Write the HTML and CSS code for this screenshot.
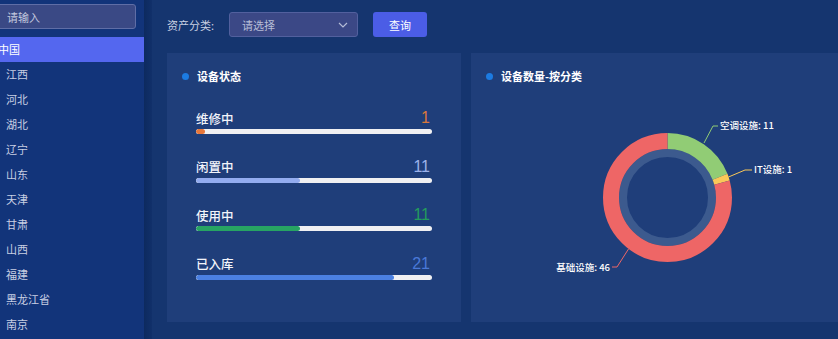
FILE: index.html
```html
<!DOCTYPE html>
<html lang="zh-CN">
<head>
    <meta charset="UTF-8">
    <meta name="viewport" content="width=device-width, initial-scale=1.0">
    <title>资产统计</title>
    <link rel="stylesheet" href="styles.css">
</head>
<body>

<div class="page">
    <div class="sidebar">
        <div class="search">
            <input type="text" placeholder="请输入">
        </div>
        <ul class="tree">
            <li class="root active"><span>中国</span></li>
            <li>江西</li>
            <li>河北</li>
            <li>湖北</li>
            <li>辽宁</li>
            <li>山东</li>
            <li>天津</li>
            <li>甘肃</li>
            <li>山西</li>
            <li>福建</li>
            <li>黑龙江省</li>
            <li>南京</li>
        </ul>
    </div>
    <div class="divider"></div>

    <div class="main">
        <div class="filter">
            <label>资产分类:</label>
            <div class="select">
                <span>请选择</span>
                <svg width="10" height="6" viewBox="0 0 10 6"><path d="M1 1l4 4 4-4" fill="none" stroke="#b4bcd6" stroke-width="1.2"/></svg>
            </div>
            <button class="query">查询</button>
        </div>

        <div class="cards">
            <div class="card status">
                <div class="card-title"><i></i>设备状态</div>
                <div class="status-list">
                    <div class="row">
                        <div class="row-head"><span>维修中</span><b class="orange">1</b></div>
                        <div class="bar"><div class="fill orange-bg" style="width: 4%"></div></div>
                    </div>
                    <div class="row">
                        <div class="row-head"><span>闲置中</span><b class="lilac">11</b></div>
                        <div class="bar"><div class="fill lilac-bg" style="width: 44%"></div></div>
                    </div>
                    <div class="row">
                        <div class="row-head"><span>使用中</span><b class="green">11</b></div>
                        <div class="bar"><div class="fill green-bg" style="width: 44%"></div></div>
                    </div>
                    <div class="row">
                        <div class="row-head"><span>已入库</span><b class="blue">21</b></div>
                        <div class="bar"><div class="fill blue-bg" style="width: 84%"></div></div>
                    </div>
                </div>
            </div>

            <div class="card chart">
                <div class="card-title"><i></i>设备数量-按分类</div>
                <svg class="donut" width="367" height="227">
                    <circle cx="196.5" cy="102.5" r="44.5" fill="none" stroke="#3c5a8e" stroke-width="8"/>
                    <g transform="rotate(-90 196.5 102.5)">
                        <circle cx="196.5" cy="102.5" r="56.5" fill="none" stroke="#91cc75" stroke-width="16" stroke-dasharray="67.33 400"/>
                        <circle cx="196.5" cy="102.5" r="56.5" fill="none" stroke="#fac858" stroke-width="16" stroke-dasharray="6.12 400" stroke-dashoffset="-67.33"/>
                        <circle cx="196.5" cy="102.5" r="56.5" fill="none" stroke="#ee6666" stroke-width="16" stroke-dasharray="281.55 400" stroke-dashoffset="-73.45"/>
                    </g>
                    <polyline points="233,48 242,31 247,31" fill="none" stroke="#91cc75" stroke-width="1"/>
                    <polyline points="257.5,82 274,75 281,75" fill="none" stroke="#fac858" stroke-width="1"/>
                    <polyline points="157.5,154 146,172 141,172" fill="none" stroke="#ee6666" stroke-width="1"/>
                    <text x="249" y="34">空调设施: 11</text>
                    <text x="283" y="78">IT设施: 1</text>
                    <text x="139" y="176" text-anchor="end">基础设施: 46</text>
                </svg>
            </div>
        </div>
    </div>
</div>

</body>
</html>
```

FILE: styles.css
```css
* {
    box-sizing: border-box;
}

html, body {
    margin: 0;
    height: 100%;
    overflow: hidden;
}

body {
    font-family: "Noto Sans CJK SC", "Noto Sans", sans-serif;
    background: #15356f;
    color: #c4cce2;
}

.page {
    display: flex;
    height: 100vh;
}

.sidebar {
    width: 144px;
    flex-shrink: 0;
    background: #12347a;
    padding-top: 4px;
    overflow: hidden;
}

.divider {
    width: 8px;
    flex-shrink: 0;
    background: linear-gradient(90deg, #0d2a5f, #11306a);
}

.search input {
    display: block;
    width: 140px;
    height: 25px;
    margin-left: -4px;
    padding: 0 10px;
    font: 11px "Noto Sans CJK SC", sans-serif;
    background: #3a4985;
    border: 1px solid #5f6ea6;
    border-radius: 3px;
    color: #fff;
    outline: none;
}

.search input::placeholder {
    color: #c3c8de;
}

.tree {
    list-style: none;
    margin: 8px 0 0;
    padding: 0;
}

.tree li {
    height: 25px;
    line-height: 25px;
    padding-left: 6px;
    font-size: 11px;
    color: #c8cfe3;
    white-space: nowrap;
}

.tree li.root {
    padding-left: 0;
}

.tree li.root span {
    margin-left: -2px;
}

.tree li.active {
    background: #5467ef;
    color: #fff;
}

.main {
    flex: 1;
    min-width: 0;
    padding: 12px 0 0 15px;
    display: flex;
    flex-direction: column;
}

.filter {
    display: flex;
    align-items: center;
    height: 25px;
}

.filter label {
    font-size: 11px;
    color: #c9d0e2;
    width: 62px;
}

.select {
    width: 129px;
    height: 25px;
    background: #3b4886;
    border: 1px solid #52609e;
    border-radius: 3px;
    display: flex;
    align-items: center;
    justify-content: space-between;
    padding: 0 9px 0 12px;
    font-size: 11px;
    color: #b7bed7;
}

.query {
    margin-left: 15px;
    width: 54px;
    height: 25px;
    border: none;
    border-radius: 3px;
    background: #4b5de6;
    color: #fff;
    font: 11px "Noto Sans CJK SC", sans-serif;
}

.cards {
    display: flex;
    gap: 10px;
    margin-top: 16px;
    height: 269px;
}

.card {
    background: #1f3e7a;
    display: flex;
    flex-direction: column;
}

.card.status {
    width: 294px;
    flex-shrink: 0;
}

.card.chart {
    flex: 1;
    min-width: 0;
    overflow: hidden;
}

.card-title {
    display: flex;
    align-items: center;
    height: 14px;
    margin-top: 16px;
    padding-left: 15px;
    font-size: 11px;
    font-weight: bold;
    color: #fff;
}

.card-title i {
    width: 7px;
    height: 7px;
    border-radius: 50%;
    background: #1c7be2;
    margin-right: 8px;
}

.status-list {
    padding: 26px 29px 0;
}

.row {
    margin-bottom: 23.5px;
}

.row-head {
    display: flex;
    justify-content: space-between;
    align-items: center;
    height: 18px;
    font-size: 12.5px;
    font-weight: 500;
    color: #f2f4fa;
}

.row-head b {
    font-family: "Liberation Sans", sans-serif;
    font-weight: normal;
    font-size: 16px;
    padding-right: 2px;
}

.bar {
    margin-top: 2px;
    height: 5px;
    background: #f0f0f2;
    border-radius: 3px;
    overflow: hidden;
}

.fill {
    height: 100%;
    border-radius: 3px;
}

.orange { color: #d9783c; }
.lilac { color: #9cb2ea; }
.green { color: #239c5d; }
.blue { color: #4a79d8; }

.orange-bg { background: #e8773a; }
.lilac-bg { background: #93acef; }
.green-bg { background: #27a463; }
.blue-bg { background: #4b80e2; }

.donut {
    display: block;
    margin-top: 12px;
    overflow: visible;
}

.donut text {
    font-size: 9.5px;
    font-weight: 500;
    fill: #fff;
    font-family: "Noto Sans CJK SC", sans-serif;
}
```
